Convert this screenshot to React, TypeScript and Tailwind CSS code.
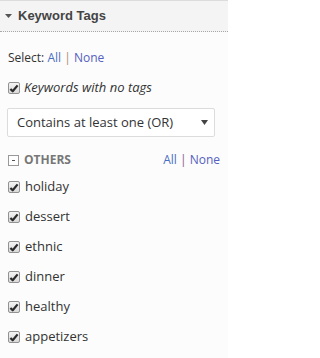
import React from "react";

function Check() {
  return (
    <span className="relative inline-flex h-[12px] w-[12px] shrink-0 items-center justify-center rounded-[2px] border border-[#929292] bg-gradient-to-b from-[#f4f4f4] to-[#dadada]">
      <svg width="10" height="9" viewBox="0 0 10 9" className="block">
        <path d="M1.4 4.9 L3.7 7.3 L8.6 1.4" fill="none" stroke="#2b2b2b" strokeWidth="2.2" strokeLinejoin="round" />
      </svg>
    </span>
  );
}

const items = ["holiday", "dessert", "ethnic", "dinner", "healthy", "appetizers"];

export default function App() {
  return (
    <div className="h-[358px] w-[228px] overflow-hidden bg-[#fcfcfc] text-[#333]" style={{ fontFamily: '"Open Sans", sans-serif' }}>
      <div className="h-[1px] bg-[#dcdcdc]" />
      <div className="flex h-[31px] items-center gap-[6px] border-b border-dotted border-[#a8a8a8] bg-[#f4f4f4] pl-[5px]">
        <svg width="7" height="4" viewBox="0 0 7 4" className="block">
          <path d="M0 0 L7 0 L3.5 4 Z" fill="#555" />
        </svg>
        <span className="text-[13px] font-bold text-[#444]" style={{ fontFamily: '"Liberation Sans", Arial, sans-serif' }}>
          Keyword Tags
        </span>
      </div>

      <div className="mt-[18px] pl-[8px] text-[12px] leading-[16px]">
        Select: <span className="text-[#4a6fc4]">All</span> <span className="text-[#b08a70]">|</span>{" "}
        <span className="text-[#5560c0]">None</span>
      </div>

      <div className="mt-[12px] flex h-[20px] items-center gap-[4px] pl-[8px]">
        <Check />
        <span className="text-[13px] italic text-[#333]">Keywords with no tags</span>
      </div>

      <div className="ml-[7px] mt-[10px] flex h-[29px] w-[208px] items-center justify-between rounded-[2px] border border-[#dcdcdc] bg-white pl-[9px] pr-[6px]">
        <span className="text-[13px] text-[#333]">Contains at least one (OR)</span>
        <svg width="7" height="5" viewBox="0 0 7 5" className="block">
          <path d="M0 0 L7 0 L3.5 5 Z" fill="#444" />
        </svg>
      </div>

      <div className="mt-[13px] flex h-[20px] items-center justify-between pl-[8px] pr-[8px]">
        <div className="flex items-center gap-[5px]">
          <span className="flex h-[11px] w-[11px] items-center justify-center border border-[#999] bg-white">
            <span className="block h-[1px] w-[3px] bg-[#555]" />
          </span>
          <span className="text-[12px] font-bold text-[#777]">OTHERS</span>
        </div>
        <div className="text-[12px]">
          <span className="text-[#4a6fc4]">All</span> <span className="text-[#8a5a8a]">|</span>{" "}
          <span className="text-[#5560c0]">None</span>
        </div>
      </div>

      <div className="mt-[2px]">
        {items.map((t) => (
          <div key={t} className="flex h-[30px] items-center gap-[5px] pl-[8px]">
            <Check />
            <span className="text-[13px] text-[#333]">{t}</span>
          </div>
        ))}
      </div>
    </div>
  );
}
